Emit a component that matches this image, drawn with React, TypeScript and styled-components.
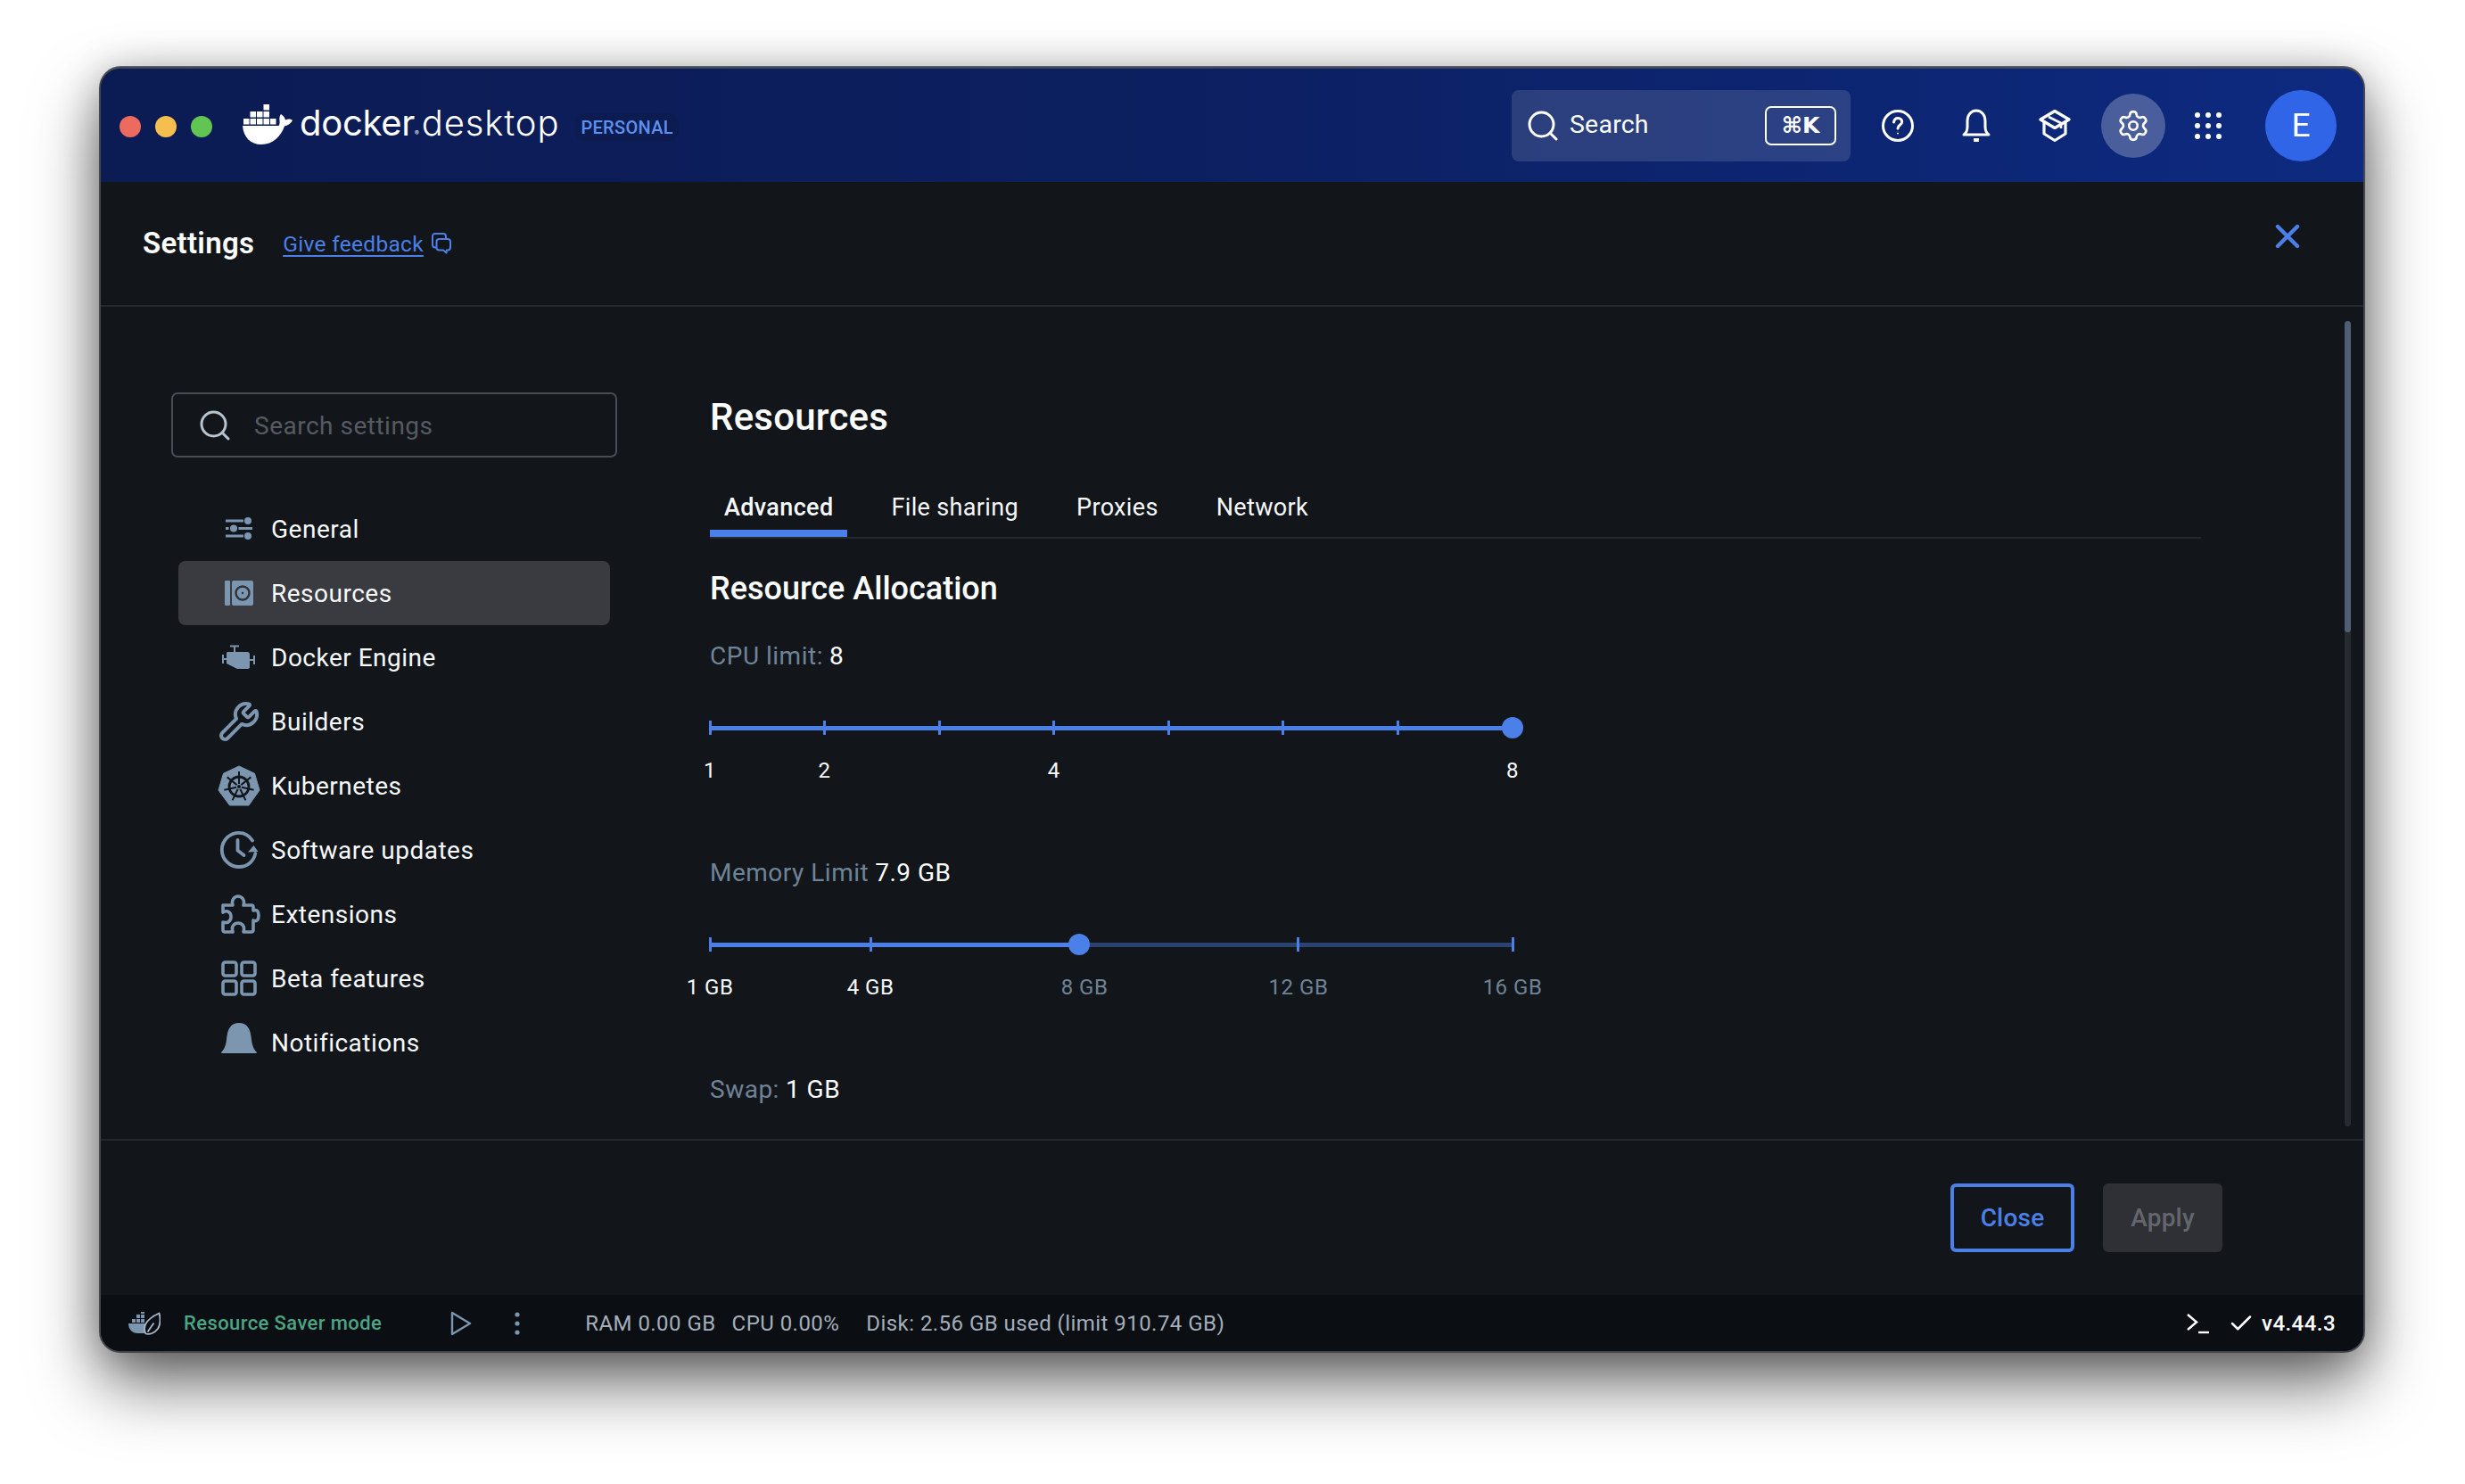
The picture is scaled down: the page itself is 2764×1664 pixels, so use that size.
import React from "react";
import styled, { createGlobalStyle } from "styled-components";
import { Settings as GearIcon, Wrench, Check, X } from "lucide-react";

const Global = createGlobalStyle`
  html, body { margin: 0; padding: 0; background: #fff; }
  body { width: 2764px; height: 1664px; overflow: hidden; font-family: Roboto, "Liberation Sans", sans-serif; }
  * { box-sizing: border-box; }
`;

const Page = styled.div`
  width: 2764px;
  height: 1664px;
  padding: 77px 0 0 113px;
  background: #fff;
`;
const Window = styled.div`
  width: 2537px;
  height: 1438px;
  display: flex;
  flex-direction: column;
  border-radius: 22px;
  overflow: hidden;
  background: #12161b;
  box-shadow: 0 0 0 2px #45494f, 0 -2px 0 1px #57647f, 0 36px 76px rgba(0, 0, 0, 0.58), 0 4px 46px rgba(0, 0, 0, 0.28);
`;
const TitleBar = styled.header`
  height: 127px;
  flex: none;
  display: flex;
  align-items: center;
  padding: 0 30px 0 21px;
  background: linear-gradient(90deg, #0b1b53 0%, #0c1f5f 45%, #0d2a80 100%);
`;
const Lights = styled.div`
  display: flex;
  gap: 16px;
  margin-top: 2px;
`;
const Light = styled.span<{ $c: string }>`
  width: 24px;
  height: 24px;
  border-radius: 50%;
  background: ${(p) => p.$c};
`;
const Brand = styled.div`
  display: flex;
  align-items: center;
  margin-left: 34px;
`;
const BrandName = styled.span`
  margin-left: 4px;
  color: #fff;
  font-family: Inter, sans-serif;
  font-weight: 300;
  font-size: 40px;
  letter-spacing: 0.9px;
  line-height: 56px;
  white-space: nowrap;
  transform: translateY(3px);
`;
const BrandStrong = styled.span`
  font-weight: 400;
  letter-spacing: -0.3px;
`;
const BrandMark = styled.span`
  font-size: 7px;
  font-weight: 400;
  letter-spacing: 0;
  margin: 0 3px 0 0;
`;
const Plan = styled.span`
  margin-left: 18px;
  padding: 4px 6px;
  border-radius: 12px;
  background: #0c1c50;
  color: #5e90ef;
  font-size: 20px;
  font-weight: 500;
  letter-spacing: 0.3px;
  line-height: 24px;
  transform: translateY(2px);
`;
const TitleRight = styled.div`
  margin-left: auto;
  display: flex;
  align-items: center;
`;
const TopSearch = styled.div`
  width: 380px;
  height: 80px;
  display: flex;
  align-items: center;
  padding: 0 16px 0 18px;
  border-radius: 8px;
  background: rgba(255, 255, 255, 0.13);
  color: #fff;
  margin-right: 17px;
`;
const TopSearchText = styled.span`
  margin-left: 13px;
  font-size: 28.5px;
  letter-spacing: 0.2px;
  transform: translateY(-1px);
`;
const Kbd = styled.span`
  margin-left: auto;
  width: 80px;
  height: 44px;
  display: flex;
  align-items: center;
  justify-content: center;
  border: 2px solid #fff;
  border-radius: 7px;
  font-size: 25px;
  font-weight: 700;
  font-family: "DejaVu Sans", Roboto, sans-serif;
  letter-spacing: 0;
`;
const IconButton = styled.span<{ $active?: boolean; $mr?: number }>`
  width: 72px;
  height: 72px;
  flex: none;
  display: flex;
  align-items: center;
  justify-content: center;
  border-radius: 50%;
  margin-right: ${(p) => p.$mr ?? 16}px;
  color: #fff;
  background: ${(p) => (p.$active ? "rgba(255,255,255,0.25)" : "transparent")};
`;
const Avatar = styled.span`
  width: 80px;
  height: 80px;
  display: flex;
  align-items: center;
  justify-content: center;
  border-radius: 50%;
  background: #2f65e6;
  color: #fff;
  font-size: 37px;
`;

const Head = styled.div`
  height: 140px;
  flex: none;
  display: flex;
  align-items: center;
  padding: 0 63px 0 47px;
  border-bottom: 2px solid #25282d;
`;
const Title = styled.h1`
  margin: 0;
  color: #fff;
  font-size: 33px;
  font-weight: 600;
  letter-spacing: 0.3px;
  transform: translateY(-1px);
`;
const Feedback = styled.a`
  margin-left: 32px;
  color: #4a80e8;
  font-size: 24.5px;
  text-decoration: underline;
  text-underline-offset: 4px;
  letter-spacing: 0.3px;
`;
const FeedbackIcon = styled.span`
  display: flex;
  margin-left: 8px;
  color: #4a80e8;
`;
const CloseX = styled.span`
  margin-left: auto;
  display: flex;
  margin-top: -16px;
  color: #4a80e8;
`;

const Body = styled.div`
  position: relative;
  flex: 1;
  min-height: 0;
  display: flex;
  overflow: hidden;
`;
const Side = styled.aside`
  width: 500px;
  margin-left: 79px;
  flex: none;
  padding-top: 96px;
`;
const SideSearch = styled.div`
  height: 73px;
  display: flex;
  align-items: center;
  padding-left: 30px;
  border: 2px solid #494c52;
  border-radius: 7px;
  color: #b7c3cf;
`;
const SideSearchText = styled.span`
  margin-left: 27px;
  color: #565a61;
  font-size: 28px;
  letter-spacing: 0.5px;
  transform: translateY(1px);
`;
const Nav = styled.nav`
  margin: 44px 8px 0;
  display: flex;
  flex-direction: column;
`;
const NavRow = styled.div<{ $active?: boolean }>`
  height: 72px;
  display: flex;
  align-items: center;
  padding-left: 44px;
  border-radius: 8px;
  background: ${(p) => (p.$active ? "#3a3b40" : "transparent")};
  color: #f6f8fa;
  font-size: 28px;
  letter-spacing: 0.5px;
`;
const NavIcon = styled.span`
  width: 48px;
  height: 48px;
  flex: none;
  margin-right: 12px;
  display: flex;
  align-items: center;
  justify-content: center;
  color: #7d96b0;
`;
const Main = styled.main`
  width: 1672px;
  margin-left: 104px;
  flex: none;
  padding-top: 96px;
`;
const H2 = styled.h2`
  margin: 0;
  height: 56px;
  line-height: 56px;
  color: #fff;
  font-size: 42px;
  font-weight: 500;
  letter-spacing: 0.2px;
`;
const Tabs = styled.div`
  margin-top: 34px;
  height: 74px;
  display: flex;
  gap: 33px;
  border-bottom: 2px solid #25282d;
`;
const Tab = styled.div<{ $active?: boolean }>`
  height: 72px;
  padding: 13px 16px 0;
  display: flex;
  align-items: center;
  color: #f6f8fa;
  font-size: 27px;
  font-weight: ${(p) => (p.$active ? 500 : 400)};
  letter-spacing: 0.35px;
  border-bottom: 8px solid ${(p) => (p.$active ? "#4a80e8" : "transparent")};
`;
const H3 = styled.h3`
  margin: 32px 0 0;
  height: 48px;
  line-height: 48px;
  color: #fff;
  font-size: 36px;
  font-weight: 500;
  letter-spacing: 0;
`;
const Limit = styled.div<{ $mt: number }>`
  margin-top: ${(p) => p.$mt}px;
  height: 40px;
  line-height: 40px;
  font-size: 28px;
  letter-spacing: 0.5px;
  color: #fff;
  display: flex;
  gap: 7px;
`;
const LimitName = styled.span`
  color: #6f8397;
`;
const Slider = styled.div<{ $mt: number }>`
  position: relative;
  width: 900px;
  height: 88px;
  margin-top: ${(p) => p.$mt}px;
`;
const Track = styled.div`
  position: absolute;
  top: 22px;
  left: 0;
  right: 0;
  height: 5px;
  background: #2a4270;
`;
const Fill = styled.div`
  position: absolute;
  top: 22px;
  left: 0;
  height: 5px;
  background: #4a80e8;
`;
const Tick = styled.i`
  position: absolute;
  top: 16px;
  width: 3px;
  height: 16px;
  margin-left: -1.5px;
  background: #4a80e8;
`;
const Thumb = styled.i`
  position: absolute;
  top: 12px;
  width: 24px;
  height: 24px;
  margin-left: -12px;
  border-radius: 50%;
  background: #4a80e8;
`;
const TickLabel = styled.span<{ $on: boolean }>`
  position: absolute;
  top: 56px;
  line-height: 32px;
  font-size: 24px;
  letter-spacing: 0.5px;
  white-space: nowrap;
  transform: translateX(-50%);
  color: ${(p) => (p.$on ? "#f6f8fa" : "#6f8397")};
`;
const ScrollTrack = styled.div`
  position: absolute;
  right: 14px;
  top: 16px;
  bottom: 14px;
  width: 7px;
  border-radius: 4px;
  background: #262b32;
`;
const ScrollThumb = styled.div`
  height: 349px;
  border-radius: 4px;
  background: #4e5f75;
`;

const Foot = styled.div`
  height: 175px;
  flex: none;
  display: flex;
  justify-content: flex-end;
  align-items: center;
  gap: 32px;
  padding: 0 158px 0 0;
  border-top: 2px solid #25282d;
`;
const Btn = styled.span<{ $kind: "outline" | "off" }>`
  height: 77px;
  display: flex;
  align-items: center;
  justify-content: center;
  border-radius: 6px;
  font-size: 28px;
  font-weight: 500;
  letter-spacing: 0.2px;
  width: ${(p) => (p.$kind === "outline" ? 139 : 134)}px;
  color: ${(p) => (p.$kind === "outline" ? "#4a80e8" : "#63666c")};
  border: ${(p) => (p.$kind === "outline" ? "4px solid #4a80e8" : "none")};
  background: ${(p) => (p.$kind === "outline" ? "transparent" : "#2e3035")};
`;

const Status = styled.footer`
  height: 63px;
  flex: none;
  display: flex;
  align-items: center;
  padding: 0 31px;
  background: #0b0e12;
  color: #a3afbc;
  font-size: 24px;
  letter-spacing: 0.45px;
  white-space: nowrap;
`;
const Saver = styled.span`
  margin-left: 26px;
  color: #4ba585;
  font-size: 22px;
  font-weight: 500;
  letter-spacing: 0.4px;
`;
const StatusIcon = styled.span<{ $ml: number }>`
  display: flex;
  margin-left: ${(p) => p.$ml}px;
  color: #7d96b0;
`;
const Stat = styled.span<{ $ml: number }>`
  margin-left: ${(p) => p.$ml}px;
`;
const StatusRight = styled.div`
  margin-left: auto;
  display: flex;
  align-items: center;
  color: #fff;
`;
const CheckMark = styled.span`
  display: flex;
  margin-left: 20px;
`;
const Version = styled.span`
  margin-left: 8px;
  font-weight: 500;
`;

const Whale = () => (
  <svg width="60" height="48" viewBox="0 0 60 48" fill="#fff">
    <path d="M0 24H40C41 24 42 22 41.500 18C41 15 42 12 43 11C46 13 47.500 15 48 17.500C51 16 54 16 56 18C54 22 50 24 47 24.500C43 36 34 45 21 45C9 45 1 37 0 24Z" />
    {[1, 8.5, 16, 23.5, 31].map((x) => <rect key={x} x={x} y="16" width="6.500" height="6.500" />)}
    {[8.5, 16, 23.5].map((x) => <rect key={x} x={x} y="8" width="6.500" height="6.500" />)}
    <rect x="23.500" y="0" width="6.500" height="6.500" />
  </svg>
);
const SearchGlyph = ({ size = 34 }: { size?: number }) => (
  <svg width={size} height={size} viewBox="0 0 34 34" fill="none" stroke="currentColor" strokeWidth="3" strokeLinecap="round">
    <circle cx="15.500" cy="15.500" r="13.500" />
    <path d="M25.500 25.500l6.500 6.500" />
  </svg>
);
const Help = () => (
  <svg width="36" height="36" viewBox="0 0 36 36" fill="none" stroke="#fff" strokeWidth="3" strokeLinecap="round">
    <circle cx="18" cy="18" r="16.500" />
    <path d="M13.500 14c.5-3 2.500-4.500 4.700-4.500 2.600 0 4.500 1.800 4.500 4.100 0 3.700-4.700 3.700-4.700 7.400" />
    <circle cx="18" cy="26.500" r="1" fill="#fff" stroke="none" />
  </svg>
);
const BellLine = () => (
  <svg width="36" height="38" viewBox="0 0 36 38" fill="none" stroke="#fff" strokeWidth="3" strokeLinecap="round" strokeLinejoin="round">
    <path d="M4 29c2.700-2.500 4-4 4-9v-6C8 7 12 2 18 2s10 5 10 12v6c0 5 1.300 6.500 4 9z" />
    <path d="M15 35h6" strokeWidth="4" strokeLinecap="butt" />
  </svg>
);
const Cap = () => (
  <svg width="36" height="38" viewBox="0 0 36 38" fill="none" stroke="#fff" strokeWidth="3.200" strokeLinejoin="round">
    <path d="M6 15v13l12 7.500L30 28V15" />
    <path d="M18 2.500L34 12 18 21.500 2 12z" />
    <path d="M11 9l14 7v6" strokeWidth="2.600" />
  </svg>
);
const Apps = () => (
  <svg width="32" height="32" viewBox="0 0 32 32" fill="#fff">
    {[4, 16, 28].map((y) => [4, 16, 28].map((x) => <circle key={`${x}-${y}`} cx={x} cy={y} r="3" />))}
  </svg>
);
const Bubbles = () => (
  <svg width="24" height="26" viewBox="0 0 24 26" fill="none" stroke="currentColor" strokeWidth="2" strokeLinejoin="round">
    <path d="M6 17.500H5c-2 0-3-1.200-3-3V5c0-1.800 1-3 3-3h9c1.800 0 3 1 3 3v2" />
    <path d="M10 8h9c1.800 0 3 1 3 3v6.500c0 1.800-1.200 3-3 3h-1l-.500 3-3.500-3h-4.500c-1.800 0-3-1.200-3-3V11c0-1.800 1.200-3 3-3z" />
  </svg>
);

const General = () => (
  <svg width="48" height="48" viewBox="0 0 48 48" fill="currentColor" stroke="none">
    <rect x="9" y="13.500" width="20" height="3" />
    <circle cx="34" cy="15" r="4" />
    <rect x="9" y="22" width="3.500" height="3" />
    <circle cx="18" cy="23.500" r="4" />
    <rect x="23.500" y="22" width="15.500" height="3" />
    <rect x="9" y="30.500" width="20" height="3" />
    <circle cx="34" cy="32" r="4" />
  </svg>
);
const Vault = () => (
  <svg width="48" height="48" viewBox="0 0 48 48">
    <rect x="8" y="10" width="6" height="28" rx="1" fill="currentColor" />
    <rect x="16" y="10" width="24" height="28" rx="2" fill="currentColor" />
    <circle cx="28" cy="24" r="7.500" fill="none" stroke="#2f3238" strokeWidth="2.400" />
    <circle cx="28" cy="24" r="1.200" fill="#2f3238" />
  </svg>
);
const Engine = () => (
  <svg width="48" height="48" viewBox="0 0 48 48" fill="currentColor">
    <rect x="14" y="10.500" width="10" height="2" />
    <rect x="18" y="11" width="2" height="7.500" />
    <path d="M11 18H33Q36 18 36 21V35Q36 37 33 37H22L10 31V20Q10 18 11 18Z" />
    <rect x="5" y="21" width="2" height="10" />
    <rect x="6" y="25" width="5" height="2" />
    <rect x="40" y="22" width="2" height="10" />
    <rect x="35" y="26" width="6" height="2" />
  </svg>
);
const Kube = () => {
  const spokes = Array.from({ length: 7 }, (_, k) => {
    const a = ((-90 + (k * 360) / 7) * Math.PI) / 180;
    return { x1: 24 + 3 * Math.cos(a), y1: 25 + 3 * Math.sin(a), x2: 24 + 17 * Math.cos(a), y2: 25 + 17 * Math.sin(a) };
  });
  return (
    <svg width="48" height="48" viewBox="0 0 48 48">
      <path d="M24 2l17.500 8.300 5.500 18.700-12 17H13.500L1 29l5.500-18.700z" fill="currentColor" stroke="currentColor" strokeWidth="1" strokeLinejoin="round" />
      <circle cx="24" cy="25" r="11" fill="none" stroke="#12161b" strokeWidth="2.800" />
      {spokes.map((s) => (
        <line key={s.x2} x1={s.x1} y1={s.y1} x2={s.x2} y2={s.y2} stroke="#12161b" strokeWidth="2" />
      ))}
      <circle cx="24" cy="25" r="2" fill="#12161b" />
    </svg>
  );
};
const ClockArrow = () => (
  <svg width="48" height="48" viewBox="0 0 48 48" fill="none" stroke="currentColor" strokeWidth="3.800" strokeLinecap="round">
    <path d="M39 13.500C35.500 7.800 30 4.800 24 4.800 13.400 4.800 4.800 13.400 4.800 24S13.400 43 24 43c9.500 0 16.600-6.500 18.300-15" />
    <path d="M22.500 13v11.500l7 5.500" />
    <path d="M34 26.500L45.500 26 40.500 19z" fill="currentColor" stroke="none" />
  </svg>
);
const PuzzlePiece = () => (
  <svg width="48" height="48" viewBox="0 0 48 48" fill="none" stroke="currentColor" strokeWidth="3.600" strokeLinejoin="round">
    <path d="M6 14H17C15 8 19 4 23 4C27 4 31 8 29 14H38C39.500 14 40 15 40 16V20C45 18 46 22 46 26C46 30 44 33 40 31V42C40 43 39 44 38 44H29C31 37 27 34 23 34C19 34 15 37 17 44H8C7 44 6 43 6 42V33C12 35 15 31 15 27C15 22 11 19 6 22Z" />
  </svg>
);
const BetaGrid = () => (
  <svg width="48" height="48" viewBox="0 0 48 48" fill="none" stroke="currentColor" strokeWidth="3.600">
    <rect x="6" y="6" width="15" height="15" rx="2.500" />
    <rect x="27" y="6" width="15" height="15" rx="2.500" />
    <rect x="6" y="27" width="15" height="15" rx="2.500" />
    <rect x="27" y="27" width="15" height="15" rx="2.500" />
  </svg>
);
const SolidBell = () => (
  <svg width="48" height="48" viewBox="0 0 48 48" fill="currentColor">
    <path d="M4 35c3.500-3.500 5-7 6-14C11 8 15 2 24 2s13 6 14 19c1 7 2.500 10.500 6 14l-.5 1H4.500z" />
  </svg>
);
const SaverIcon = () => (
  <svg width="36" height="26" viewBox="0 0 36 26" fill="none">
    <path d="M0 13h19v11h-9C5 24 0 20 0 13z" fill="currentColor" />
    <path d="M4 8h4v4H4zM9 8h4v4H9zM14 8h4v4h-4zM9 3h4v4H9zM14 3h4v4h-4zM14 0h4v2h-4z" fill="currentColor" />
    <path d="M19.500 24.500C16 18 18 9 34.500 1.500 36.500 10 36 20 26.500 24 24 25 21.500 25 19.500 24.500zM21.500 22.500L28.500 12.500" stroke="#a6b8ca" strokeWidth="1.800" strokeLinejoin="round" />
  </svg>
);
const Play = () => (
  <svg width="24" height="28" viewBox="0 0 24 28" fill="none" stroke="currentColor" strokeWidth="2.400" strokeLinejoin="round">
    <path d="M2 2l20 12L2 26z" />
  </svg>
);
const Dots = () => (
  <svg width="6" height="26" viewBox="0 0 6 26" fill="currentColor">
    <circle cx="3" cy="3" r="2.600" />
    <circle cx="3" cy="13" r="2.600" />
    <circle cx="3" cy="23" r="2.600" />
  </svg>
);
const Prompt = () => (
  <svg width="26" height="24" viewBox="0 0 26 24" fill="none" stroke="#fff" strokeWidth="2.400">
    <path d="M1 2l10 8.500L1 19" />
    <path d="M13 22h12" />
  </svg>
);

const nav = [
  { label: "General", icon: <General /> },
  { label: "Resources", icon: <Vault />, active: true },
  { label: "Docker Engine", icon: <Engine /> },
  { label: "Builders", icon: <Wrench size={48} strokeWidth={2} /> },
  { label: "Kubernetes", icon: <Kube /> },
  { label: "Software updates", icon: <ClockArrow /> },
  { label: "Extensions", icon: <PuzzlePiece /> },
  { label: "Beta features", icon: <BetaGrid /> },
  { label: "Notifications", icon: <SolidBell /> },
];

type Mark = { at: number; tick?: boolean; label?: string; labelAt?: number; on?: boolean };

const Range = ({ value, marks, mt }: { value: number; marks: Mark[]; mt: number }) => (
  <Slider $mt={mt}>
    <Track />
    <Fill style={{ width: `${value}%` }} />
    {marks.filter((m) => m.tick !== false).map((m) => <Tick key={m.at} style={{ left: `${m.at}%` }} />)}
    <Thumb style={{ left: `${value}%` }} />
    {marks.filter((m) => m.label).map((m) => (
      <TickLabel key={m.at} $on={!!m.on} style={{ left: `${m.labelAt ?? m.at}%` }}>{m.label}</TickLabel>
    ))}
  </Slider>
);

const cpuMarks: Mark[] = [
  { at: 0, label: "1", on: true },
  { at: 14.29, label: "2", on: true },
  { at: 28.57 },
  { at: 42.86, label: "4", on: true },
  { at: 57.14 },
  { at: 71.43 },
  { at: 85.71 },
  { at: 100, label: "8", on: true, tick: false },
];
const memMarks: Mark[] = [
  { at: 0, label: "1 GB", on: true },
  { at: 20, label: "4 GB", on: true },
  { at: 46.67, label: "8 GB", tick: false },
  { at: 73.33, label: "12 GB" },
  { at: 100, label: "16 GB" },
];

export default function App() {
  return (
    <Page>
      <Global />
      <Window>
        <TitleBar>
          <Lights>
            <Light $c="#ec6a5e" />
            <Light $c="#f4bf4f" />
            <Light $c="#61c554" />
          </Lights>
          <Brand>
            <Whale />
            <BrandName><BrandStrong>docker</BrandStrong><BrandMark>®</BrandMark>desktop</BrandName>
            <Plan>PERSONAL</Plan>
          </Brand>
          <TitleRight>
            <TopSearch>
              <SearchGlyph />
              <TopSearchText>Search</TopSearchText>
              <Kbd>⌘K</Kbd>
            </TopSearch>
            <IconButton><Help /></IconButton>
            <IconButton><BellLine /></IconButton>
            <IconButton><Cap /></IconButton>
            <IconButton $active $mr={12}><GearIcon size={38} strokeWidth={1.700} /></IconButton>
            <IconButton $mr={28}><Apps /></IconButton>
            <Avatar>E</Avatar>
          </TitleRight>
        </TitleBar>
        <Head>
          <Title>Settings</Title>
          <Feedback>Give feedback</Feedback>
          <FeedbackIcon><Bubbles /></FeedbackIcon>
          <CloseX><X size={44} strokeWidth={2.400} /></CloseX>
        </Head>
        <Body>
          <Side>
            <SideSearch>
              <SearchGlyph />
              <SideSearchText>Search settings</SideSearchText>
            </SideSearch>
            <Nav>
              {nav.map((n) => (
                <NavRow key={n.label} $active={n.active}>
                  <NavIcon>{n.icon}</NavIcon>
                  {n.label}
                </NavRow>
              ))}
            </Nav>
          </Side>
          <Main>
            <H2>Resources</H2>
            <Tabs>
              <Tab $active>Advanced</Tab>
              <Tab>File sharing</Tab>
              <Tab>Proxies</Tab>
              <Tab>Network</Tab>
            </Tabs>
            <H3>Resource Allocation</H3>
            <Limit $mt={32}><LimitName>CPU limit:</LimitName>8</Limit>
            <Range value={100} marks={cpuMarks} mt={36} />
            <Limit $mt={79}><LimitName>Memory Limit</LimitName>7.9 GB</Limit>
            <Range value={46} marks={memMarks} mt={36} />
            <Limit $mt={79}><LimitName>Swap:</LimitName>1 GB</Limit>
          </Main>
          <ScrollTrack><ScrollThumb /></ScrollTrack>
        </Body>
        <Foot>
          <Btn $kind="outline">Close</Btn>
          <Btn $kind="off">Apply</Btn>
        </Foot>
        <Status>
          <StatusIcon $ml={0}><SaverIcon /></StatusIcon>
          <Saver>Resource Saver mode</Saver>
          <StatusIcon $ml={77}><Play /></StatusIcon>
          <StatusIcon $ml={48}><Dots /></StatusIcon>
          <Stat $ml={73}>RAM 0.00 GB</Stat>
          <Stat $ml={18}>CPU 0.00%</Stat>
          <Stat $ml={30}>Disk: 2.56 GB used (limit 910.74 GB)</Stat>
          <StatusRight>
            <Prompt />
            <CheckMark><Check size={30} strokeWidth={2} /></CheckMark>
            <Version>v4.44.3</Version>
          </StatusRight>
        </Status>
      </Window>
    </Page>
  );
}
